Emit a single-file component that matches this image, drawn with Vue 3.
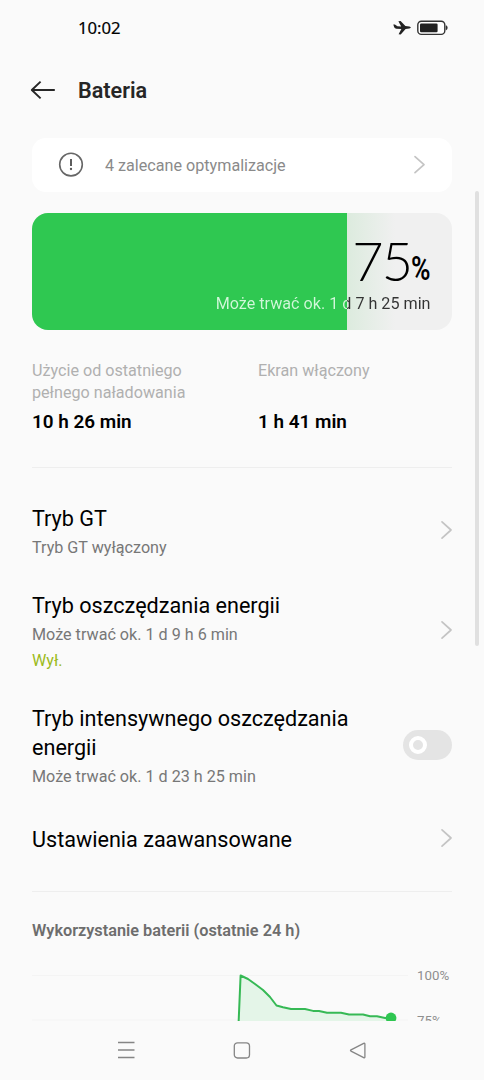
<script setup>
const rows = [
  { id: 'gt', title: ['Tryb GT'], sub: 'Tryb GT wyłączony' },
  { id: 'saver', title: ['Tryb oszczędzania energii'], sub: 'Może trwać ok. 1 d 9 h 6 min', state: 'Wył.' },
  { id: 'super', title: ['Tryb intensywnego oszczędzania', 'energii'], sub: 'Może trwać ok. 1 d 23 h 25 min', toggle: true },
  { id: 'advanced', title: ['Ustawienia zaawansowane'] },
]
const level = 75
</script>

<template>
  <div class="screen">
    <div class="content">
      <div class="status">
        <span class="clock">10:02</span>
        <svg class="plane" width="18" height="16" viewBox="0 0 18 16">
          <path d="M0.3 4.6 L1.9 4.4 L4.4 6.3 L8.2 6.5 L5.4 1.3 L7.6 1 L12.4 6.1 L16.4 6.5 Q17.8 6.9 17.8 7.5 Q17.8 8.2 16.4 8.6 L12.6 8.9 L7.7 14.4 L5.6 14.2 L8.4 8.9 L3.4 8.7 Q1.8 8.5 1.2 7.3 Z" fill="#222" />
        </svg>
        <svg class="batt" width="31" height="16" viewBox="0 0 31 16">
          <rect x="0.8" y="1.2" width="27" height="13.2" rx="3.6" fill="#fff" stroke="#333" stroke-width="1.4" />
          <rect x="3" y="3.5" width="17.6" height="8.7" rx="1.2" fill="#222" />
          <path d="M29 5.6 Q30.4 6 30.4 7.8 Q30.4 9.6 29 10 Z" fill="#333" stroke="#333" stroke-width=".4" />
        </svg>
      </div>

      <header class="header">
        <svg width="26" height="20" viewBox="0 0 26 20" fill="none" stroke="#262626" stroke-width="1.9" stroke-linejoin="round">
          <path d="M24.8 10 H1.8 M10.6 1.6 L1.8 10 L10.6 18.4" />
        </svg>
        <h1>Bateria</h1>
      </header>

      <section class="tip">
        <svg width="26" height="26" viewBox="0 0 26 26">
          <circle cx="13" cy="12.6" r="11.3" fill="none" stroke="#666" stroke-width="1.6" />
          <path d="M13 7 V14" stroke="#555" stroke-width="1.9" />
          <circle cx="13" cy="17" r="1.15" fill="#555" />
        </svg>
        <span class="tip-text">4 zalecane optymalizacje</span>
        <svg class="chev" width="13" height="20" viewBox="0 0 13 20"><path d="M2 1.6 L11 9.6 L2 17.6" /></svg>
      </section>

      <section class="level">
        <div class="fill" :style="{ width: level + '%' }"></div>
        <div class="glow"></div>
        <div class="percent"><span class="num">{{ level }}</span><span class="sign">%</span></div>
        <div class="remain">Może trwać ok. 1 d 7 h 25 min</div>
      </section>

      <section class="stats">
        <div class="stat">
          <div class="label">Użycie od ostatniego<br />pełnego naładowania</div>
          <div class="value">10 h 26 min</div>
        </div>
        <div class="stat">
          <div class="label">Ekran włączony</div>
          <div class="value">1 h 41 min</div>
        </div>
      </section>

      <section class="rows">
        <div v-for="r in rows" :key="r.id" class="row" :class="r.id">
          <div class="row-text">
            <div v-for="t in r.title" :key="t" class="title">{{ t }}</div>
            <div v-if="r.sub" class="sub">{{ r.sub }}</div>
            <div v-if="r.state" class="sub on">{{ r.state }}</div>
          </div>
          <div v-if="r.toggle" class="toggle"><i></i></div>
          <svg v-else class="chev" width="13" height="20" viewBox="0 0 13 20"><path d="M2 1.8 L11 10 L2 18.2" /></svg>
        </div>
      </section>

      <section class="usage">
        <h2>Wykorzystanie baterii (ostatnie 24 h)</h2>
        <div class="chart">
          <svg width="376" height="60" viewBox="0 0 376 60">
            <path d="M0 10.5 H376 M0 55 H376" stroke="#f4f4f4" stroke-width="1" />
            <path d="M206.5 56 L208.6 10.5 L216 14 L223 19 L231 25 L238 32 L244.5 40.5 L251 42.2 L259 44 H273 L281 45.9 H287 L295 47.7 H309 L317 49.5 H331 L338 51.2 H345 L353 53 H359 V60 H206.5 Z" fill="#e4f5e8" />
            <path d="M206.5 60 L208.6 10.5 L216 14 L223 19 L231 25 L238 32 L244.5 40.5 L251 42.2 L259 44 H273 L281 45.9 H287 L295 47.7 H309 L317 49.5 H331 L338 51.2 H345 L353 53 H359" fill="none" stroke="#36b955" stroke-width="2" stroke-linejoin="round" />
            <circle cx="359" cy="53" r="5.4" fill="#2fc651" />
          </svg>
          <div class="axis"><span>100%</span><span>75%</span></div>
        </div>
      </section>

      <div class="scrollbar"></div>
    </div>

    <nav class="nav">
      <svg width="18" height="18" viewBox="0 0 18 18"><path d="M1 1.5 H17.5 M1 9 H17.5 M1 16.5 H17.5" /></svg>
      <svg width="18" height="18" viewBox="0 0 18 18"><rect x="1.3" y="1.8" width="15.2" height="15.2" rx="3.2" /></svg>
      <svg width="18" height="18" viewBox="0 0 18 18"><path d="M15.9 3.1 V15.9 Q15.9 17.2 14.7 16.6 L2 10.1 Q1 9.5 2 8.9 L14.7 2.4 Q15.9 1.8 15.9 3.1 Z" /></svg>
    </nav>
  </div>
</template>

<style>
body { background: #fafafa; }
</style>

<style scoped>
.screen {
  width: 484px;
  height: 1080px;
  overflow: hidden;
  background: #fafafa;
  font-family: Roboto, "Noto Sans", sans-serif;
  font-size: 16.15px;
  color: #000;
}
svg { display: block; flex: none; }
.content { position: relative; height: 1021px; overflow: hidden; box-sizing: border-box; padding: 0 32px; }
.status { display: flex; align-items: center; height: 56px; padding-left: 46px; padding-right: 4px; }
.clock { flex: 1; font-family: "Noto Sans", sans-serif; font-size: 16.7px; font-weight: 400; line-height: 24px; color: #000; -webkit-text-stroke: .2px #000; }
.plane { margin-right: 6px; }
.header { display: flex; align-items: center; height: 68px; margin-left: -2px; gap: 22px; }
h1 { margin: 1px 0 0; font-size: 21.6px; font-weight: 600; line-height: 28px; color: #262626; }
.tip {
  display: flex; align-items: center; height: 54px; margin-top: 14px; box-sizing: border-box;
  padding: 0 26px; background: #fff; border-radius: 14px;
}
.tip-text { flex: 1; margin-left: 21px; color: #8a8a8a; }
.chev path { fill: none; stroke: #c4c4c4; stroke-width: 1.7; stroke-linecap: round; stroke-linejoin: round; }
.level { position: relative; height: 117px; margin-top: 21px; border-radius: 16px; background: #f0f0f0; overflow: hidden; }
.fill { position: absolute; left: 0; top: 0; bottom: 0; background: #2fc851; }
.glow { position: absolute; left: 75%; top: 0; bottom: 0; width: 48px; background: linear-gradient(90deg, #dcebde, #f0f0f0); }
.percent { position: absolute; right: 21px; top: 16px; display: flex; align-items: baseline; line-height: 64px; }
.num { font-family: Lato, sans-serif; font-weight: 300; font-size: 54px; letter-spacing: -2px; }
.sign { font-size: 33.5px; font-weight: 600; width: 20px; transform: translateY(-1px) scaleX(.79); transform-origin: left; }
.remain {
  position: absolute; left: 0; right: 0; top: 80px; line-height: 22px; text-align: right;
  padding-right: 21.5px;
  background: linear-gradient(90deg, #d2f7da 75%, #333 75%);
  -webkit-background-clip: text; background-clip: text; color: transparent;
}
.stats { display: grid; grid-template-columns: 226px 1fr; height: 138px; padding-top: 30px; box-sizing: border-box; border-bottom: 1px solid #eee; }
.label { height: 44px; line-height: 22px; color: #b0b0b0; }
.value { margin-top: 5px; line-height: 26px; font-size: 18.9px; font-weight: 600; }
.rows { height: 424px; box-sizing: border-box; padding-top: 36px; border-bottom: 1px solid #eee; }
.row { display: flex; align-items: center; justify-content: space-between; }
.saver { margin-top: 30px; }
.super { margin-top: 30px; }
.advanced { margin-top: 35px; }
.title { font-size: 21.6px; line-height: 29px; white-space: nowrap; }
.sub { line-height: 26px; color: #777; }
.title + .sub { margin-top: 2px; }
.sub.on { color: #9cba1b; }
.row .chev { margin-top: -5px; margin-right: -1px; }
.row.advanced .chev { margin-top: -4px; }
.toggle { display: flex; align-items: center; width: 49px; height: 30px; margin-top: -5px; box-sizing: border-box; padding-left: 6px; border-radius: 15px; background: #e4e4e4; }
.toggle i { width: 18px; height: 18px; box-sizing: border-box; border: 4px solid #fff; border-radius: 50%; }
h2 { margin: 0; padding-top: 27px; line-height: 24px; font-size: 16.3px; font-weight: 600; color: #6d6d6d; white-space: nowrap; }
.chart { display: flex; margin-top: 22px; }
.axis { margin-left: 9px; padding-top: 1px; font-size: 13.3px; line-height: 20px; color: #8e8e8e; }
.axis span { display: block; height: 45px; }
.scrollbar { position: absolute; left: 475px; top: 191px; width: 4px; height: 455px; border-radius: 2px; background: #e0e0e0; }
.nav { display: flex; justify-content: center; align-items: center; height: 58px; gap: 98px; background: #fafafa; }
.nav svg { fill: none; stroke: #858585; stroke-width: 1.3; }
</style>
